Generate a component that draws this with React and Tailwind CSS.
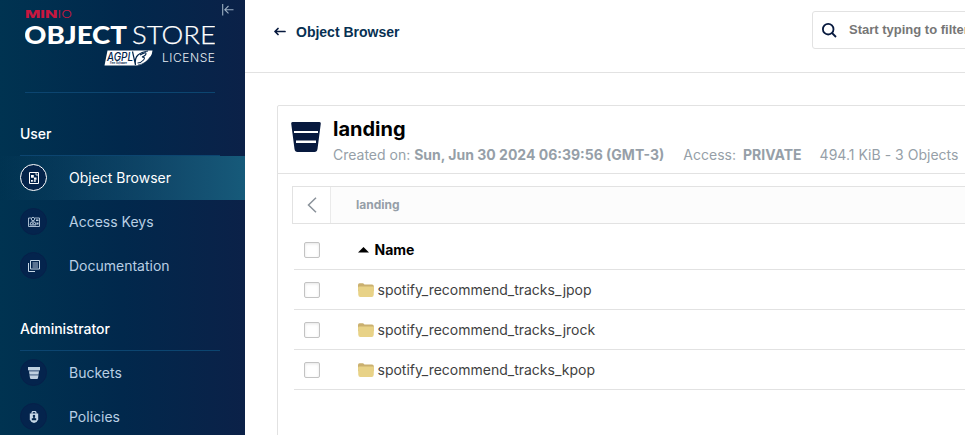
import React from "react";

const inter = "font-['Inter','Liberation_Sans',sans-serif]";

function Logo() {
  return (
    <svg width="190" height="58" viewBox="25 9 190 58" className="block">
      <g fontFamily="Inter, sans-serif" fill="#c8173f">
        <text x="25" y="17.700" fontSize="10" fontWeight="800" textLength="32.5" lengthAdjust="spacingAndGlyphs">MIN</text>
        <text x="57.5" y="17.700" fontSize="10" fontWeight="300" textLength="14.5" lengthAdjust="spacingAndGlyphs">IO</text>
      </g>
      <g fontFamily="Lato, sans-serif" fill="#fff">
        <text x="24" y="43.8" fontSize="25.5" fontWeight="900" textLength="103" lengthAdjust="spacingAndGlyphs">OBJECT</text>
        <text x="132" y="43.8" fontSize="25.5" fontWeight="300" textLength="84" lengthAdjust="spacingAndGlyphs" stroke="#fff" strokeWidth=".25">STORE</text>
      </g>
      <path d="M107.5 50.5H152.5Q152 58 144 63Q141 65.500 136 65.500H104.500Z" fill="#fff" />
      <text x="107" y="60.800" fontSize="11.500" fontWeight="500" fontStyle="italic" fontFamily="Inter, sans-serif" fill="#03264c" textLength="26" lengthAdjust="spacingAndGlyphs">AGPL</text>
      <text x="110" y="64.300" fontSize="3" fontWeight="700" fontStyle="italic" fontFamily="Inter, sans-serif" fill="#03264c" textLength="17" lengthAdjust="spacingAndGlyphs">Free Software</text>
      <path d="M132.500 51.500l3 13.500q-1-7 2.500-10t10-4" fill="none" stroke="#03264c" strokeWidth="1.200" />
      <path d="M140 55q6-3.500 6-1.500t-4 3.500q4 0 1.500 3t-6 3" fill="none" stroke="#03264c" strokeWidth="1.100" />
      <path d="M138 65q8-1 12.500-8.500" fill="none" stroke="#03264c" strokeWidth=".7" />
      <text x="162" y="61.700" fontSize="12" fontWeight="300" fontFamily="Inter, sans-serif" fill="#e7edf3" textLength="53">LICENSE</text>
    </svg>
  );
}

const icons = {
  browser: (
    <svg width="12" height="12" viewBox="0 0 12 12" fill="none" stroke="#fff">
      <path d="M1.500.5h9v11h-9z" />
      <path d="M8 .5V3h2.500" strokeWidth=".8" />
      <path d="M3 3h2.800v2.800H3zM6 5.500h2.500v2.200H6zM3 8h1.800v1.800H3zM5.800 8.300h2v1.500h-2z" fill="#fff" stroke="none" />
    </svg>
  ),
  keys: (
    <svg width="12" height="12" viewBox="0 0 12 12" fill="none" stroke="#b9cbdc" strokeWidth=".9">
      <path d="M3 2H.5v8.500h11V2H7" />
      <circle cx="5" cy="3" r="1.700" />
      <path d="M2 9q0-3.500 3-3.500T8 9zM3.500 6l3 3M6.500 6l-3 3" />
      <path d="M8 3.500h2.500v1.500H8zM8.500 6.500h2v2h-2z" fill="#b9cbdc" stroke="none" />
    </svg>
  ),
  docs: (
    <svg width="12" height="12" viewBox="0 0 12 12" fill="none" stroke="#c7d7e6">
      <path d="M2.500.5h9v8.500h-9zM.5 3v8.500H7" />
      <path d="M4.500 3h5.500M4.500 5h5.500M4.500 7h5.500" strokeWidth=".9" />
    </svg>
  ),
  bucket: (
    <svg width="12" height="12" viewBox="0 0 12 12" fill="#bfd0e0">
      <path d="M0 0h12v3.300H0z" />
      <path d="M1 4.300h10l-.4 2.800H1.400zM1.500 8.300h9L10 11q-.1 1-1 1H3q-.9 0-1-1z" />
      <path d="M.8 3.300h10.400v1H.8zM1.400 7.100h9.200v1.200H1.400z" fill="#738ba8" />
    </svg>
  ),
  lock: (
    <svg width="12" height="12" viewBox="0 0 12 12" fill="#c7d7e6">
      <path d="M4 2.800V2q0-1.700 2-1.700T8 2v.8" fill="none" stroke="#c7d7e6" strokeWidth="1.200" />
      <path d="M1.800 2.500h8.400v6Q9.500 11 6 12 2.500 11 1.800 8.500z" />
      <path d="M6 3.700a1.300 1.300 0 0 1 .8 2.300v1.200h1.400v2H3.800v-2h1.400V6A1.300 1.300 0 0 1 6 3.700z" fill="#03264c" />
    </svg>
  ),
};

function NavItem({ icon, label, active }) {
  return (
    <div className={active ? "flex h-11 items-center bg-linear-to-r from-[#16597600] to-[#165a7a] pl-5 text-white" : "flex h-11 items-center pl-5 text-[#b9cfe4]"}>
      <span className={active ? "mb-px flex size-[27px] shrink-0 items-center justify-center rounded-full border border-white bg-[#04234a]" : "mb-px flex size-[27px] shrink-0 items-center justify-center rounded-full border border-[#06204a] bg-[#04244d]"}>
        {icons[icon]}
      </span>
      <span className="ml-[22px] text-sm">{label}</span>
    </div>
  );
}

function NavHeading({ children }) {
  return <div className="mr-[25px] ml-5 border-b border-[#0c4570] pb-[11px] text-sm leading-5 font-medium tracking-[-0.05px] text-white">{children}</div>;
}

function Sidebar() {
  return (
    <aside className="relative h-full w-[245px] shrink-0 overflow-hidden bg-[linear-gradient(90deg,#003351_0%,#01284c_50%,#0b2148_100%)]">
      <svg className="absolute top-1 left-[222px]" width="12" height="12" viewBox="0 0 12 12" fill="none" stroke="#9cafc2" strokeWidth="1.100">
        <path d="M.7 0v11.500M11.500 5.700H3M6.500 2L2.800 5.700l3.700 3.700" />
      </svg>
      <div className="mr-[30px] ml-[25px] border-b border-[#0c4570] pt-[9px] pb-[25px]">
        <Logo />
      </div>
      <div className="mt-[31px]">
        <NavHeading>User</NavHeading>
        <NavItem icon="browser" label="Object Browser" active />
        <NavItem icon="keys" label="Access Keys" />
        <NavItem icon="docs" label="Documentation" />
      </div>
      <div className="mt-[31px]">
        <NavHeading>Administrator</NavHeading>
        <NavItem icon="bucket" label="Buckets" />
        <NavItem icon="lock" label="Policies" />
      </div>
    </aside>
  );
}

function Checkbox() {
  return <span className="size-4 shrink-0 rounded-[2px] border border-[#c3c3c3] bg-white shadow-[inset_0_1px_3px_rgba(0,0,0,0.1)]" />;
}

function Folder() {
  return (
    <svg width="16" height="14" viewBox="0 0 16 14" className="block shrink-0">
      <path d="M0 8V2Q0 .3 1.500.3h3.300q.8 0 1.200.7l.4.600H14q1.800 0 1.800 1.600V8z" fill="#cab06f" />
      <path d="M0 4.800Q0 3.500 1.500 3.500h13q1.500 0 1.500 1.300l-.3 7q-.1 2.200-2 2.200H2.300Q.4 14 .3 11.800z" fill="#e8d287" />
    </svg>
  );
}

const folders = ["spotify_recommend_tracks_jpop", "spotify_recommend_tracks_jrock", "spotify_recommend_tracks_kpop"];

export default function App() {
  return (
    <div className={`flex h-[435px] w-[965px] overflow-hidden bg-white ${inter}`}>
      <Sidebar />
      <main className="min-w-0 flex-1 overflow-hidden whitespace-nowrap">
        <header className="flex h-[73px] border-b border-[#e2e2e2]">
          <div className="flex h-[63px] items-center pl-[29px]">
            <svg width="12" height="9" viewBox="0 0 12 9" fill="none" stroke="#07193e" strokeWidth="1.700" strokeLinecap="round" strokeLinejoin="round">
              <path d="M11 4.500H1.200M4 1.500l-3 3 3 3" />
            </svg>
            <span className="ml-[10px] font-['Liberation_Sans',sans-serif] text-sm font-bold text-[#073052]">Object Browser</span>
          </div>
          <div className="mt-[11px] -mr-10 ml-auto flex h-[38px] w-[193px] shrink-0 items-center rounded-[3px] border border-[#e2e2e2] pl-[9px]">
            <svg width="15" height="15" viewBox="0 0 15 15" fill="none" stroke="#07193e" strokeWidth="1.800" className="shrink-0">
              <circle cx="6.200" cy="6.200" r="5.300" />
              <path d="M10 10l4 4" />
            </svg>
            <span className="ml-[12px] font-['Liberation_Sans',sans-serif] text-[13px] font-bold text-[#767676]">Start typing to filter</span>
          </div>
        </header>
        <section className="mt-8 ml-8 h-[400px] w-[720px] rounded-tl-[2px] border border-[#e2e2e2]">
          <div className="flex h-[68px] border-b border-[#e2e2e2] pl-[13px]">
            <svg width="30" height="30" viewBox="0 0 30 30" className="mt-4 shrink-0">
              <path d="M1.500 0h27q1.500 0 1.300 1.500L26.500 27q-.4 3-3 3h-17q-2.600 0-3-3L.2 1.500Q0 0 1.500 0z" fill="#07193e" />
              <path d="M3 9h24v2H3zM5 18.500h20v2.500H5z" fill="#fff" />
            </svg>
            <div className="ml-3 pt-[11px]">
              <h1 className="text-xl leading-6 font-bold text-black">landing</h1>
              <div className="mt-1 flex text-sm leading-5 text-[#969fa8]">
                <span>Created on: <b>Sun, Jun 30 2024 06:39:56 (GMT-3)</b></span>
                <span className="ml-[19px]">Access:</span>
                <b className="ml-[7px]">PRIVATE</b>
                <span className="ml-[18px] tracking-[0.02px]">494.1 KiB - 3 Objects</span>
              </div>
            </div>
          </div>
          <div className="mt-3 ml-[14px] flex h-[38px] border border-[#e2e2e2] bg-[#fcfcfc]">
            <div className="flex w-[38px] items-center justify-center border-r border-[#eaeaea] bg-white">
              <svg width="10" height="16" viewBox="0 0 10 16" fill="none" stroke="#8a929a" strokeWidth="1.500"><path d="M9 .7L1.500 8 9 15.300" /></svg>
            </div>
            <span className="flex items-center pl-[25px] text-xs font-bold text-[#969fa8]">landing</span>
          </div>
          <div className="ml-4">
            <div className="flex h-[46px] items-center border-b border-[#e2e2e2] pt-[7px] pl-[10px]">
              <Checkbox />
              <svg width="12" height="6" viewBox="0 0 12 6" className="ml-[38px]"><path d="M0 5.500L5.500 0 11 5.500z" /></svg>
              <span className="ml-[4.5px] text-sm font-bold text-black">Name</span>
            </div>
            {folders.map((name) => (
              <div key={name} className="flex h-10 items-center border-b border-[#e2e2e2] pl-[10px]">
                <Checkbox />
                <span className="ml-[38px]"><Folder /></span>
                <span className="ml-[3.5px] text-sm text-[#3f3f3f]">{name}</span>
              </div>
            ))}
          </div>
        </section>
      </main>
    </div>
  );
}
